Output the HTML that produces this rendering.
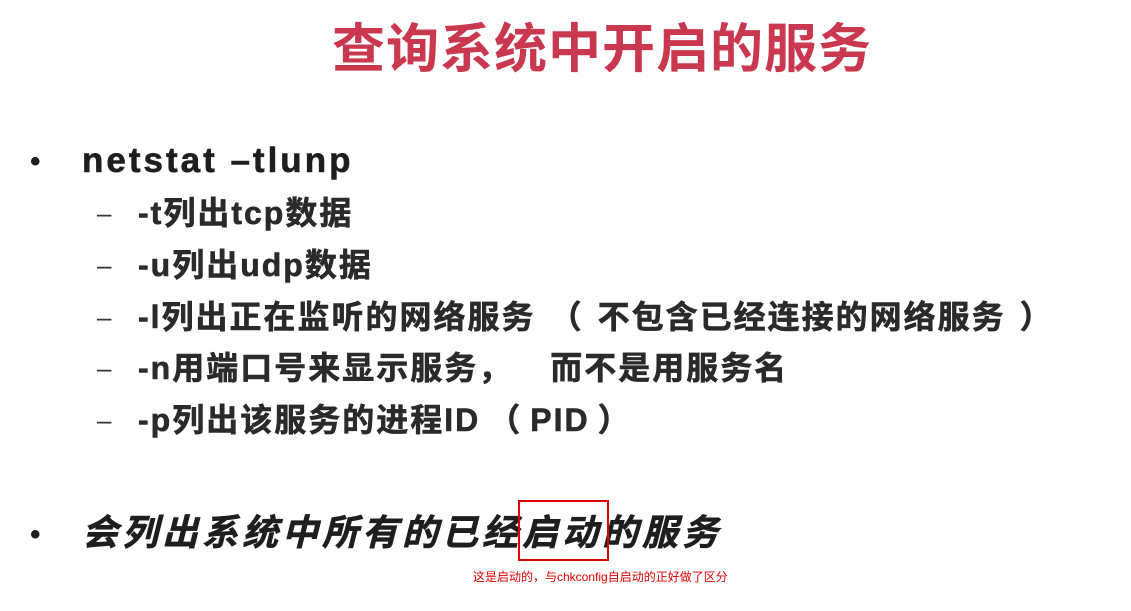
<!DOCTYPE html>
<html><head><meta charset="utf-8"><style>
body{margin:0;width:1131px;height:611px;background:#fff;overflow:hidden;position:relative;font-family:"Liberation Sans","Noto Sans CJK SC",sans-serif;color:#1e1e1e}
.a{position:absolute;white-space:nowrap;font-weight:bold;line-height:1}
.t{left:332px;top:23px;font-size:53px;color:#c9384f;letter-spacing:1px}
.dot{font-size:30px}
.b{font-size:35px;letter-spacing:3px}
.s{font-size:32px;letter-spacing:2px;color:#2a2a2a;-webkit-text-stroke:0.6px #2a2a2a}
.d{font-size:26px;font-weight:normal;color:#333}
.p{margin:0 14px}
</style></head><body>
<div class="a t">查询系统中开启的服务</div>
<div class="a dot" style="left:30px;top:147px">•</div>
<div class="a b" style="left:82px;top:143px;-webkit-text-stroke:0.6px #1e1e1e">netstat –tlunp</div>
<div class="a d" style="left:97px;top:200px">–</div>
<div class="a s" style="left:138px;top:197px">-t列出tcp数据</div>
<div class="a d" style="left:97px;top:252px">–</div>
<div class="a s" style="left:138px;top:249px">-u列出udp数据</div>
<div class="a d" style="left:97px;top:304px">–</div>
<div class="a s" style="left:138px;top:301px">-l列出正在监听的网络服务<span class="p">（</span>不包含已经连接的网络服务<span class="p">）</span></div>
<div class="a d" style="left:97px;top:355px">–</div>
<div class="a s" style="left:138px;top:352px">-n用端口号来显示服务<span style="margin-right:38px">，</span>而不是用服务名</div>
<div class="a d" style="left:97px;top:407px">–</div>
<div class="a s" style="left:138px;top:404px">-p列出该服务的进程ID<span style="margin:0 8px">（</span>PID<span style="margin:0 8px">）</span></div>
<div class="a dot" style="left:30px;top:520px">•</div>
<div class="a b" style="left:82px;top:515px;font-style:italic;font-size:36px;letter-spacing:4px;-webkit-text-stroke:0.6px #1e1e1e">会列出系统中所有的已经启动的服务</div>
<div style="position:absolute;left:518px;top:500px;width:87px;height:57px;border:2px solid #d00"></div>
<div class="a" style="left:473px;top:571px;font-size:12px;font-weight:normal;color:#d00">这是启动的，与chkconfig自启动的正好做了区分</div>
</body></html>
